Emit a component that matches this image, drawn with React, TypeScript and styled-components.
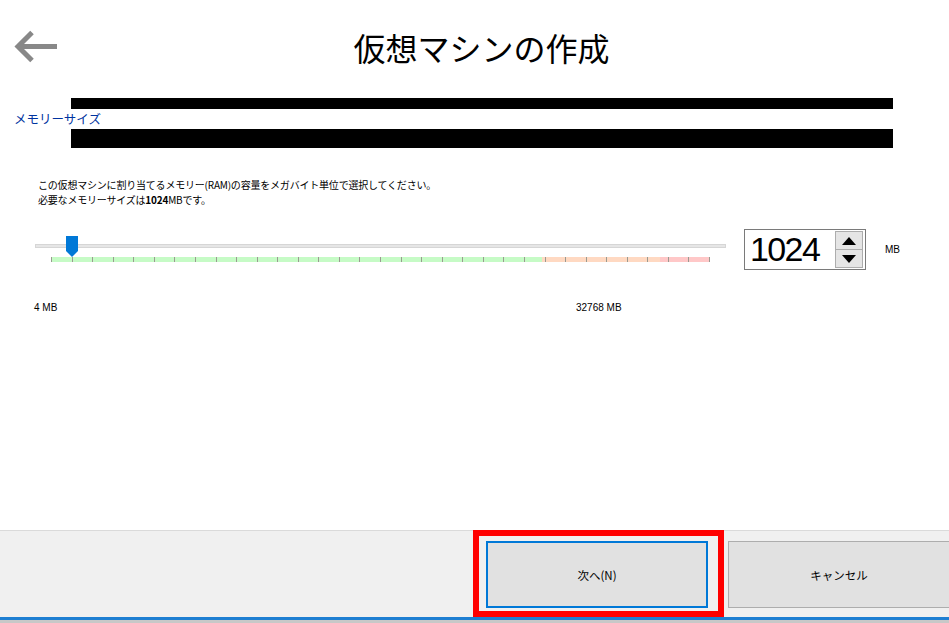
import React from 'react';
import styled, { createGlobalStyle } from 'styled-components';

const GlobalStyle = createGlobalStyle`
  html, body {
    margin: 0;
    padding: 0;
    background: #fff;
  }
  body {
    font-family: "Noto Sans CJK JP", "Liberation Sans", sans-serif;
    color: #000;
  }
`;

const TICK_COUNT = 33;

const Page = styled.div`
  width: 949px;
  height: 623px;
  display: flex;
  flex-direction: column;
  overflow: hidden;
  background: #fff;
`;

const Header = styled.div`
  height: 98px;
  display: flex;
  align-items: flex-start;
`;

const BackButton = styled.div`
  margin: 30px 0 0 14px;
  width: 44px;
  height: 33px;
  cursor: pointer;
`;

const Title = styled.h1`
  flex: 1;
  margin: 27px 0 0 0;
  padding-right: 44px;
  text-align: center;
  font-size: 32px;
  line-height: 40px;
  font-weight: 400;
`;

const Section = styled.div`
  padding-left: 14px;
`;

const Redaction = styled.div<{ $h: number }>`
  margin-left: 57px;
  width: 822px;
  height: ${p => p.$h}px;
  background: #000;
`;

const SectionLabel = styled.div`
  height: 20px;
  line-height: 20px;
  font-size: 12.5px;
  color: #0033a0;
`;

const Description = styled.div`
  margin-top: 29px;
  padding-left: 38px;
  font-size: 10px;
  line-height: 15px;
  letter-spacing: -0.2px;
  b {
    font-weight: 700;
  }
`;

const SliderRow = styled.div`
  margin-top: 22px;
  height: 41px;
  display: flex;
  align-items: flex-start;
  padding-left: 35px;
`;

const Slider = styled.div`
  position: relative;
  width: 691px;
  height: 41px;
`;

const Track = styled.div`
  margin-top: 15px;
  height: 4px;
  box-sizing: border-box;
  background: #e6e6e6;
  border: 1px solid #d6d6d6;
`;

const TickBar = styled.div`
  position: relative;
  margin: 9px 0 0 16px;
  width: 659px;
  height: 5px;
  display: flex;
`;

const Zone = styled.div<{ $w: number; $c: string }>`
  width: ${p => p.$w}px;
  height: 100%;
  background: ${p => p.$c};
`;

const Ticks = styled.div`
  position: absolute;
  inset: 0;
  display: flex;
  justify-content: space-between;
`;

const Tick = styled.div`
  width: 1px;
  height: 100%;
  background: #9a9a90;
`;

const Thumb = styled.svg`
  position: absolute;
  left: 31px;
  top: 7px;
`;

const SpinBox = styled.div`
  margin-left: 18px;
  width: 122px;
  height: 41px;
  box-sizing: border-box;
  border: 1px solid #7a7a7a;
  display: flex;
  align-items: center;
  padding: 0 2px 0 5px;
  background: #fff;
`;

const SpinValue = styled.div`
  flex: 1;
  font-family: "Liberation Sans", Arial, sans-serif;
  font-size: 34px;
  letter-spacing: -1.6px;
  line-height: 39px;
`;

const SpinButtons = styled.div`
  width: 28px;
  height: 37px;
  display: flex;
  flex-direction: column;
  box-sizing: border-box;
  border: 1px solid #adadad;
`;

const SpinButton = styled.div<{ $down?: boolean }>`
  flex: 1;
  display: flex;
  align-items: center;
  justify-content: center;
  background: #e5e5e5;
  border-top: ${p => (p.$down ? '1px solid #adadad' : 'none')};
`;

const Unit = styled.div`
  margin-left: 19px;
  line-height: 41px;
  font-size: 10px;
  font-family: "Liberation Sans", Arial, sans-serif;
`;

const Scale = styled.div`
  margin-top: 31px;
  padding-left: 34px;
  display: grid;
  grid-template-columns: 542px auto;
  font-family: "Liberation Sans", Arial, sans-serif;
  font-size: 10px;
  line-height: 14px;
`;

const Spacer = styled.div`
  flex: 1;
`;

const Footer = styled.div`
  height: 86px;
  flex-shrink: 0;
  background: #f0f0f0;
  border-top: 1px solid #dadada;
  display: flex;
  align-items: flex-start;
  padding-left: 473px;
`;

const Highlight = styled.div`
  margin-top: -1px;
  border: 6px solid #ff0000;
  padding: 5px 10px 3px 7px;
`;

const Button = styled.button<{ $primary?: boolean }>`
  flex-shrink: 0;
  width: 222px;
  height: 67px;
  box-sizing: border-box;
  margin: 0;
  background: #e1e1e1;
  border: ${p => (p.$primary ? '2px solid #0078d7' : '1px solid #adadad')};
  font-family: "Noto Sans CJK JP", sans-serif;
  font-size: 11.5px;
  color: #000;
  padding: 0;
`;

const CancelButton = styled(Button)`
  margin: 10px 0 0 4px;
`;

const TaskLine = styled.div`
  height: 3px;
  flex-shrink: 0;
  background: #1e7fd2;
`;

const TaskBase = styled.div`
  height: 3px;
  flex-shrink: 0;
  background: #c8c8c8;
`;

const Arrow = () => (
  <svg width="44" height="33" viewBox="0 0 44 33">
    <g stroke="#888888" strokeWidth="5" fill="none" strokeLinejoin="miter">
      <path d="M4 16.5 H43" />
      <path d="M18 2.5 L4 16.5 L18 30.5" />
    </g>
  </svg>
);

const Triangle = ({ up }: { up?: boolean }) => (
  <svg width="14" height="8" viewBox="0 0 14 8">
    <path d={up ? 'M0 8 L7 0 L14 8 Z' : 'M0 0 L14 0 L7 8 Z'} fill="#000" />
  </svg>
);

export default function App() {
  return (
    <>
      <GlobalStyle />
      <Page>
        <Header>
          <BackButton>
            <Arrow />
          </BackButton>
          <Title>仮想マシンの作成</Title>
        </Header>

        <Section>
          <Redaction $h={11} />
          <SectionLabel>メモリーサイズ</SectionLabel>
          <Redaction $h={19} />
        </Section>

        <Description>
          この仮想マシンに割り当てるメモリー(RAM)の容量をメガバイト単位で選択してください。
          <br />
          必要なメモリーサイズは<b>1024</b>MBです。
        </Description>

        <SliderRow>
          <Slider>
            <Track />
            <TickBar>
              <Zone $w={491} $c="#c6fbc6" />
              <Zone $w={118} $c="#ffd9c2" />
              <Zone $w={50} $c="#ffc8c8" />
              <Ticks>
                {Array.from({ length: TICK_COUNT }, (_, i) => (
                  <Tick key={i} />
                ))}
              </Ticks>
            </TickBar>
            <Thumb width="12" height="21" viewBox="0 0 12 21">
              <path d="M0 0 H12 V15 L6 21 L0 15 Z" fill="#0078d7" />
            </Thumb>
          </Slider>
          <SpinBox>
            <SpinValue>1024</SpinValue>
            <SpinButtons>
              <SpinButton>
                <Triangle up />
              </SpinButton>
              <SpinButton $down>
                <Triangle />
              </SpinButton>
            </SpinButtons>
          </SpinBox>
          <Unit>MB</Unit>
        </SliderRow>

        <Scale>
          <span>4 MB</span>
          <span>32768 MB</span>
        </Scale>

        <Spacer />

        <Footer>
          <Highlight>
            <Button $primary>次へ(N)</Button>
          </Highlight>
          <CancelButton>キャンセル</CancelButton>
        </Footer>
        <TaskLine />
        <TaskBase />
      </Page>
    </>
  );
}
